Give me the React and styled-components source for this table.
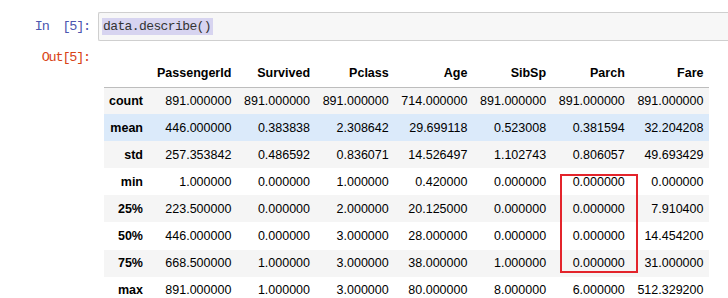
import React from 'react';
import styled, { createGlobalStyle } from 'styled-components';

const GlobalStyle = createGlobalStyle`
  html, body {
    margin: 0;
    padding: 0;
    background: #ffffff;
  }
  body {
    width: 728px;
    height: 298px;
    overflow: hidden;
  }
`;

const columns = ['PassengerId', 'Survived', 'Pclass', 'Age', 'SibSp', 'Parch', 'Fare'];

const rows = [
  ['count', '891.000000', '891.000000', '891.000000', '714.000000', '891.000000', '891.000000', '891.000000'],
  ['mean', '446.000000', '0.383838', '2.308642', '29.699118', '0.523008', '0.381594', '32.204208'],
  ['std', '257.353842', '0.486592', '0.836071', '14.526497', '1.102743', '0.806057', '49.693429'],
  ['min', '1.000000', '0.000000', '1.000000', '0.420000', '0.000000', '0.000000', '0.000000'],
  ['25%', '223.500000', '0.000000', '2.000000', '20.125000', '0.000000', '0.000000', '7.910400'],
  ['50%', '446.000000', '0.000000', '3.000000', '28.000000', '0.000000', '0.000000', '14.454200'],
  ['75%', '668.500000', '1.000000', '3.000000', '38.000000', '1.000000', '0.000000', '31.000000'],
  ['max', '891.000000', '1.000000', '3.000000', '80.000000', '8.000000', '6.000000', '512.329200'],
];

const Notebook = styled.div`
  display: flex;
  flex-direction: column;
  padding-top: 12px;
`;

const Cell = styled.div`
  display: flex;
  align-items: ${p => (p.$output ? 'flex-start' : 'center')};
`;

const Prompt = styled.div`
  width: 98px;
  flex: none;
  text-align: right;
  font-family: "Liberation Mono", monospace;
  font-size: 13.5px;
  letter-spacing: -1.2px;
  color: ${p => p.$color};
  white-space: pre;
  padding-right: 8px;
  box-sizing: border-box;
  line-height: 16px;
  margin-top: ${p => p.$top || 0}px;
`;

const InputArea = styled.div`
  flex: 1;
  height: 29px;
  display: flex;
  align-items: center;
  padding-left: 3px;
  background: #f7f7f7;
  border: 1px solid #cfcfcf;
  border-right: none;
  border-radius: 2px 0 0 2px;
  box-sizing: border-box;
`;

const Code = styled.span`
  font-family: "Liberation Mono", monospace;
  font-size: 13px;
  letter-spacing: -0.6px;
  color: #333;
  background: #d7d4f0;
  padding: 2px 2px 2px 1px;
  line-height: 13px;
`;

const OutputArea = styled.div`
  position: relative;
  padding-left: 6px;
  padding-top: 19px;
`;

const Table = styled.table`
  border-collapse: collapse;
  table-layout: fixed;
  font-family: "Liberation Sans", Arial, sans-serif;
  font-size: 12.5px;
  color: #000;
`;

const Head = styled.thead`
  border-bottom: 1px solid #bdbdbd;
`;

const HeadCell = styled.th`
  height: 27px;
  padding: 0 6px;
  text-align: right;
  font-weight: bold;
  width: ${p => p.$w}px;
  box-sizing: border-box;
`;

const Row = styled.tr`
  height: 27.1px;
  background: ${p => (p.$hover ? '#dbeafa' : p.$odd ? '#f5f5f5' : '#ffffff')};
`;

const IndexCell = styled.th`
  padding: 0 8px 0 0;
  text-align: right;
  font-weight: bold;
`;

const DataCell = styled.td`
  padding: 0 6px;
  text-align: right;
  white-space: nowrap;
`;

const Marker = styled.div`
  position: absolute;
  left: 462px;
  top: 133px;
  width: 78px;
  height: 99px;
  border: 2px solid #e3242b;
  box-sizing: border-box;
  pointer-events: none;
`;

const widths = [47, 84, 78.7, 78.7, 78.7, 78.7, 78.7, 78.7];

export default function App() {
  return (
    <>
      <GlobalStyle />
      <Notebook>
        <Cell>
          <Prompt $color="#4c56b0">{'In  [5]:'}</Prompt>
          <InputArea>
            <Code>data.describe()</Code>
          </InputArea>
        </Cell>
        <Cell $output>
          <Prompt $color="#d84315" $top={9}>{'Out[5]:'}</Prompt>
          <OutputArea>
            <Table>
              <Head>
                <tr>
                  <HeadCell $w={widths[0]} />
                  {columns.map((c, i) => (
                    <HeadCell key={c} $w={widths[i + 1]}>{c}</HeadCell>
                  ))}
                </tr>
              </Head>
              <tbody>
                {rows.map((r, i) => (
                  <Row key={r[0]} $odd={i % 2 === 0} $hover={r[0] === 'mean'}>
                    <IndexCell>{r[0]}</IndexCell>
                    {r.slice(1).map((v, j) => (
                      <DataCell key={j}>{v}</DataCell>
                    ))}
                  </Row>
                ))}
              </tbody>
            </Table>
            <Marker />
          </OutputArea>
        </Cell>
      </Notebook>
    </>
  );
}
